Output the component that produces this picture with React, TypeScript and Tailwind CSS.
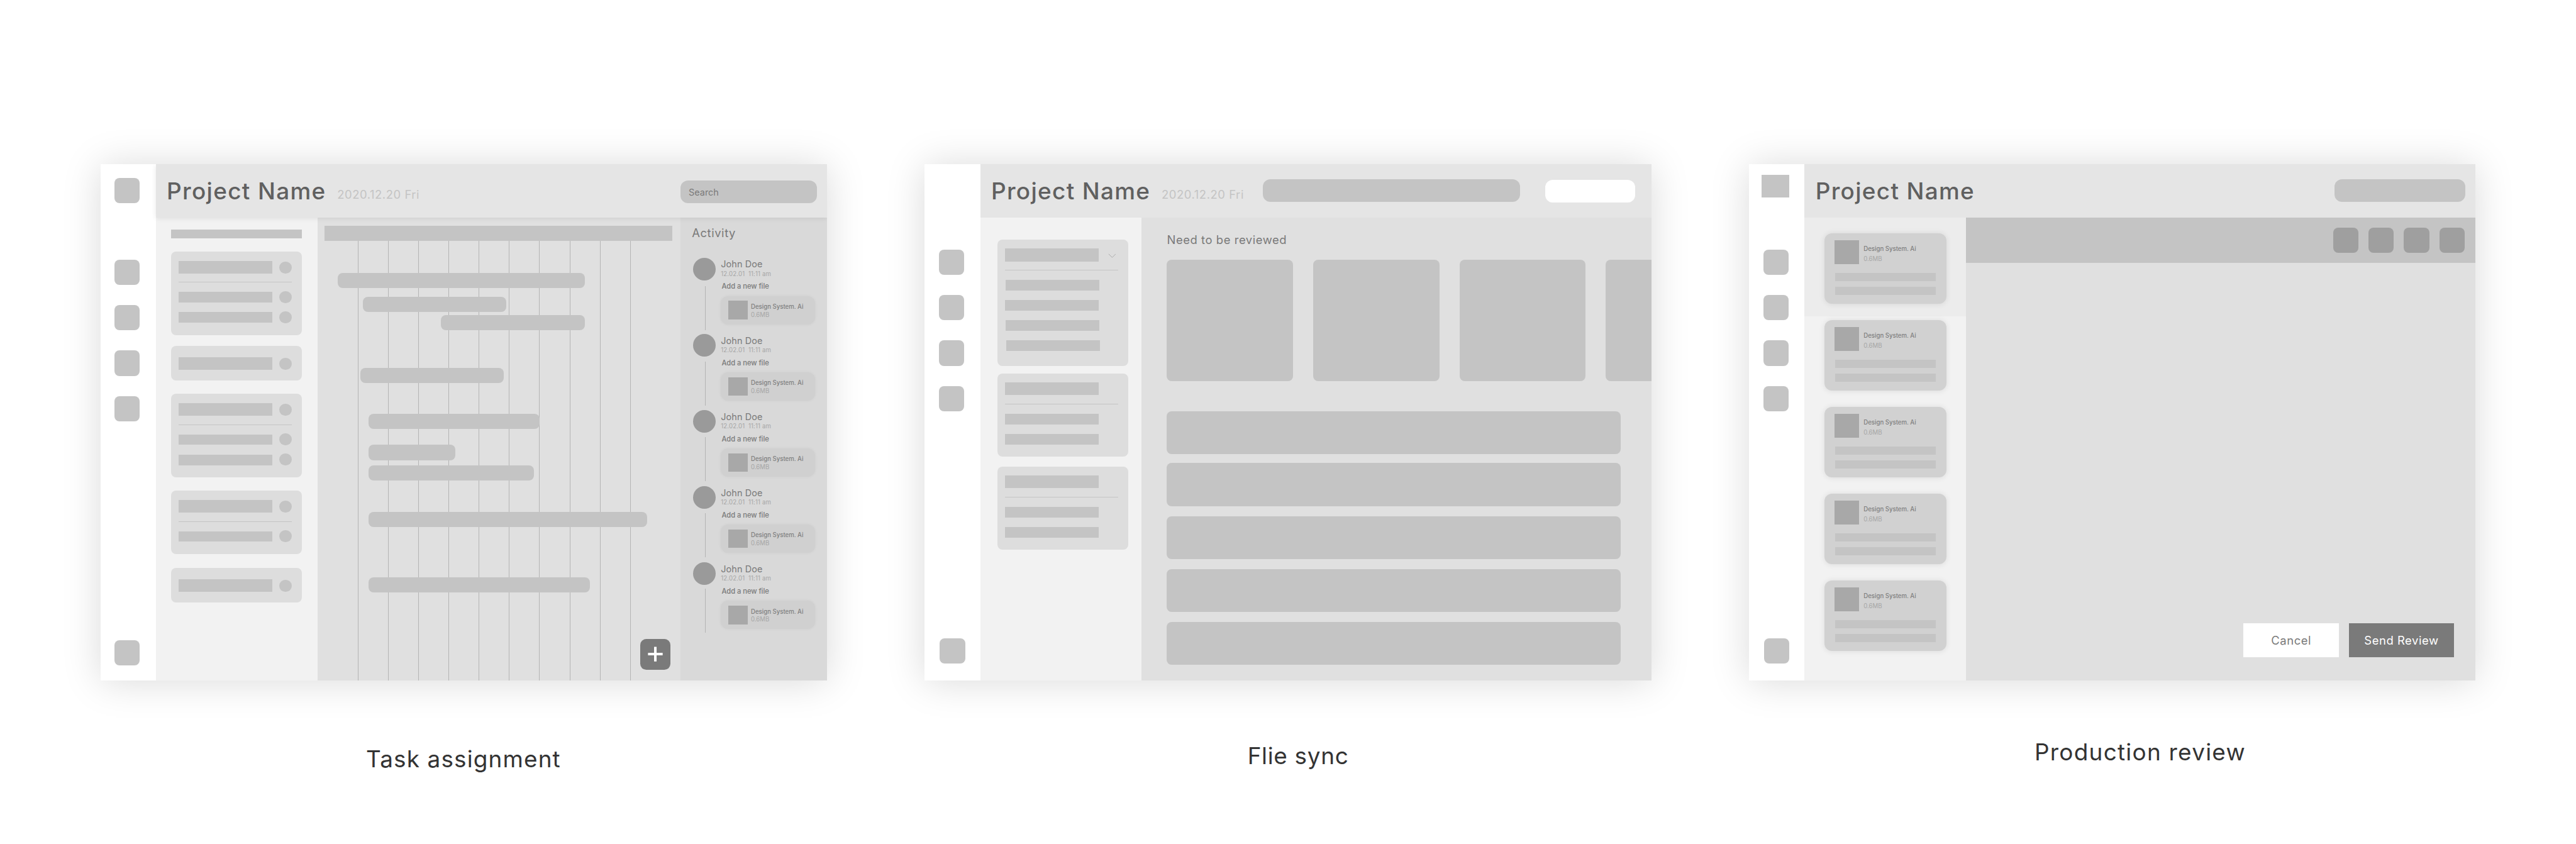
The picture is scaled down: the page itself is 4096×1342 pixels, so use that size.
import type { ReactNode } from "react";

/* ---------- shared pieces ---------- */

function Frame({
  caption,
  captionClass,
  children,
}: {
  caption: string;
  captionClass: string;
  children: ReactNode;
}) {
  return (
    <section className="w-[1440px] shrink-0">
      <div className="flex h-[1024px] overflow-hidden bg-[#e0e0e0] shadow-[0_2px_72px_rgba(0,0,0,0.15)]">
        {children}
      </div>
      <h2
        className={`text-[46px] leading-[58px] font-normal whitespace-nowrap text-[#333333] ${captionClass}`}
      >
        {caption}
      </h2>
    </section>
  );
}

function Rail({ logo, navClass, footClass }: { logo?: string; navClass: string; footClass: string }) {
  return (
    <nav className="flex w-[110px] shrink-0 flex-col bg-white">
      <div className="h-[106px] shrink-0">{logo && <div className={`bg-[#c4c4c4] ${logo}`} />}</div>
      <div className={`flex flex-col gap-[40px] pl-[28px] ${navClass}`}>
        {[0, 1, 2, 3].map((i) => (
          <div key={i} className="size-[50px] rounded-[10px] bg-[#c4c4c4]" />
        ))}
      </div>
      <div className={`mt-auto size-[50px] rounded-[10px] bg-[#c4c4c4] ${footClass}`} />
    </nav>
  );
}

function Header({ date, className = "", children }: { date?: boolean; className?: string; children: ReactNode }) {
  return (
    <header className={`flex h-[106px] shrink-0 items-start bg-[#e5e5e5] pl-[21.5px] ${className}`}>
      <h1 className="mt-[25.3px] w-[338px] text-[46px] leading-[58px] font-medium tracking-[1.66px] whitespace-nowrap text-[#606060]">
        Project Name
      </h1>
      {date && (
        <span className="mt-[46.7px] text-[23px] leading-[29px] tracking-[0.69px] whitespace-nowrap text-[#c4c4c4]">
          2020.12.20 Fri
        </span>
      )}
      {children}
    </header>
  );
}

/* ---------- task assignment ---------- */

function TaskCard({ rows, className }: { rows: number; className: string }) {
  const single = rows === 0;
  return (
    <div
      className={`w-[260px] rounded-[10px] bg-[#dddddd] px-[15px] ${single ? "py-[22px]" : "pt-[18px] pb-[23px]"} ${className}`}
    >
      <div className="flex h-[25px]">
        <div className="h-[25px] w-[186px] bg-[#c4c4c4]" />
        <div className="mt-px ml-[14px] size-[24px] rounded-full bg-[#c4c4c4]" />
      </div>
      {!single && (
        <>
          <div className="mt-[17px] h-px w-[224px] bg-[#c4c4c4]" />
          <div className="mt-[17px] flex flex-col gap-[16px]">
            {Array.from({ length: rows }, (_, i) => (
              <div key={i} className="flex h-[24px]">
                <div className="mt-[2px] h-[21px] w-[186px] bg-[#c4c4c4]" />
                <div className="ml-[14px] size-[24px] rounded-full bg-[#c4c4c4]" />
              </div>
            ))}
          </div>
        </>
      )}
    </div>
  );
}

const ganttBars = [
  "mt-[64px] ml-[26px] w-[490px]",
  "mt-[17px] ml-[76px] w-[285px]",
  "mt-[7px] ml-[231px] w-[285px]",
  "mt-[74px] ml-[71px] w-[285px]",
  "mt-[61px] ml-[88px] w-[339px]",
  "mt-[32px] ml-[88px] w-[172px]",
  "mt-[10px] ml-[88px] w-[328px]",
  "mt-[63px] ml-[88px] w-[552px]",
  "mt-[99px] ml-[88px] w-[438px]",
];

function Timeline() {
  return (
    <div className="relative w-[720px] shrink-0 pt-[16px] pl-[14px]">
      <div className="h-[30px] w-[690px] bg-[#c4c4c4]" />
      <div className="absolute top-[46px] bottom-0 left-[80px] flex">
        {Array.from({ length: 10 }, (_, i) => (
          <div key={i} className="w-[60px]">
            <div className="h-full w-px bg-[#b4b4b4]" />
          </div>
        ))}
      </div>
      <div className="relative">
        {ganttBars.map((bar) => (
          <div key={bar} className={`h-[30px] rounded-[10px] bg-[#c4c4c4] ${bar}`} />
        ))}
      </div>
      <button
        aria-label="Add task"
        className="absolute right-[20px] bottom-[22px] flex size-[60px] items-center justify-center rounded-[12px] bg-[#7a7a7a]"
      >
        <svg viewBox="0 0 30 30" className="size-[30px]" fill="none" stroke="#fff" strokeWidth="5">
          <path d="M15 0.5v29M0.5 15h29" />
        </svg>
      </button>
    </div>
  );
}

const threads = ["mt-[11px]", "mt-[10px]", "mt-[9px]", "mt-[8px]", "mt-[7px]"];

function Activity() {
  return (
    <aside className="w-[290px] shrink-0 bg-[#d9d9d9]">
      <h3 className="mt-[16px] ml-[22.5px] text-[23px] leading-[29px] tracking-[0.7px] text-[#7a7a7a]">Activity</h3>
      <ul className="mt-[35px] ml-[25px]">
        {threads.map((thread) => (
          <li key={thread} className="flex h-[151px] items-start">
            <div className="w-[55px] shrink-0">
              <div className="size-[45px] rounded-full bg-[#9a9a9a]" />
              <div className={`ml-[23px] h-[87px] w-px bg-[#b4b4b4] ${thread}`} />
            </div>
            <div className="whitespace-nowrap">
              <p className="mt-[1.9px] text-[18px] leading-[22px] tracking-[0.1px] text-[#7a7a7a]">John Doe</p>
              <p className="mt-[0.7px] text-[12px] leading-[14px] tracking-[0.19px] whitespace-pre text-[#a6a6a6]">
                {"12.02.01  11:11 am"}
              </p>
              <p className="mt-[10.8px] ml-[1.5px] text-[14px] leading-[17px] font-medium tracking-[-0.08px] text-[#7a7a7a]">
                Add a new file
              </p>
              <div className="mt-[9.6px] flex h-[56px] w-[186px] items-center rounded-[15px] bg-[#d0d0d0] pl-[15px] shadow-[0_0_6px_rgba(0,0,0,0.05)]">
                <div className="h-[37px] w-[38px] bg-[#a8a8a8]" />
                <div className="ml-[6.5px] flex flex-col gap-[2px] pt-[2px] text-[12px] leading-[14px]">
                  <span className="font-medium text-[#7f7f7f]">Design System. Ai</span>
                  <span className="text-[#a6a6a6]">0.6MB</span>
                </div>
              </div>
            </div>
          </li>
        ))}
      </ul>
    </aside>
  );
}

function TaskAssignment() {
  return (
    <Frame caption="Task assignment" captionClass="mt-[127px] ml-[526.5px] tracking-[1.43px]">
      <Rail logo="mt-[28px] ml-[28px] size-[50px] rounded-[10px]" navClass="mt-[84px]" footClass="mb-[30px] ml-[28px]" />
      <div className="flex w-[1330px] flex-col">
        <Header date className="relative z-10 shadow-[0_2px_10px_rgba(0,0,0,0.09)]">
          <div className="mt-[33px] mr-[20px] ml-auto flex h-[45px] w-[270px] items-center rounded-[15px] bg-[#c4c4c4] pt-[2px] pl-[16px] text-[18px] leading-[22px] text-[#7a7a7a]">
            Search
          </div>
        </Header>
        <div className="flex flex-1">
          <div className="w-[320px] shrink-0 bg-[#f2f2f2] pl-[30px]">
            <div className="mt-[24px] h-[18px] w-[260px] bg-[#c4c4c4]" />
            <TaskCard rows={2} className="mt-[26px] h-[165px]" />
            <TaskCard rows={0} className="mt-[22px] h-[68px]" />
            <TaskCard rows={2} className="mt-[27px] h-[165px]" />
            <TaskCard rows={1} className="mt-[27px] h-[125px]" />
            <TaskCard rows={0} className="mt-[28px] h-[68px]" />
          </div>
          <Timeline />
          <Activity />
        </div>
      </div>
    </Frame>
  );
}

/* ---------- file sync ---------- */

function FileGroup({ rows, chevron, className }: { rows: string[]; chevron?: boolean; className: string }) {
  return (
    <div className={`w-[260px] rounded-[10px] bg-[#dddddd] px-[15px] pt-[18px] ${className}`}>
      <div className="flex h-[25px]">
        <div className="w-[186px] bg-[#c4c4c4]" />
        {chevron && (
          <svg viewBox="0 0 16 9" className="mt-[9px] ml-[18px] h-[9px] w-[16px]" fill="none" stroke="#a0a0a0">
            <path d="M1 1l7 7 7-7" />
          </svg>
        )}
      </div>
      <div className="mt-[17px] h-px w-[224px] bg-[#c4c4c4]" />
      <div className="mt-[19px] flex flex-col gap-[19px]">
        {rows.map((indent, i) => (
          <div key={i} className={`h-[21px] w-[186px] bg-[#c4c4c4] ${indent}`} />
        ))}
      </div>
    </div>
  );
}

function FileSync() {
  return (
    <Frame caption="Flie sync" captionClass="mt-[120.8px] ml-[639.8px] tracking-[0.85px]">
      <Rail navClass="mt-[64px]" footClass="mb-[34px] ml-[30px]" />
      <div className="flex w-[1330px] flex-col">
        <Header date>
          <div className="mt-[30px] ml-auto h-[45px] w-[510px] rounded-[15px] bg-[#c4c4c4]" />
          <div className="mt-[31px] mr-[32px] ml-[50px] h-[45px] w-[178px] rounded-[15px] bg-white" />
        </Header>
        <div className="flex flex-1">
          <div className="w-[320px] shrink-0 bg-[#f2f2f2] pl-[34px]">
            <FileGroup chevron rows={["ml-px", "", "ml-px", "ml-[2px]"]} className="mt-[44px] h-[250px]" />
            <FileGroup rows={["", ""]} className="mt-[15px] h-[165px]" />
            <FileGroup rows={["", ""]} className="mt-[20px] h-[165px]" />
          </div>
          <div className="w-[1010px] overflow-hidden pl-[50px]">
            <h3 className="mt-[30.7px] text-[23px] leading-[29px] tracking-[0.69px] whitespace-nowrap text-[#7a7a7a]">
              Need to be reviewed
            </h3>
            <div className="mt-[24.3px] flex gap-[40px]">
              {[0, 1, 2, 3].map((i) => (
                <div key={i} className="h-[240px] w-[250px] shrink-0 rounded-[10px] bg-[#c4c4c4]" />
              ))}
            </div>
            <div className="mt-[60px] h-[85px] w-[900px] rounded-[10px] bg-[#c4c4c4]" />
            <div className="mt-[18px] flex flex-col gap-[20px]">
              {[0, 1, 2, 3].map((i) => (
                <div key={i} className="h-[85px] w-[900px] rounded-[10px] bg-[#c4c4c4]" />
              ))}
            </div>
          </div>
        </div>
      </div>
    </Frame>
  );
}

/* ---------- production review ---------- */

function ReviewCard() {
  return (
    <div className="h-[139px] w-[242px] rounded-[15px] bg-[#d1d1d1] pt-[13px] pl-[20px] shadow-[0_1px_12px_rgba(0,0,0,0.09)]">
      <div className="flex">
        <div className="h-[48px] w-[49px] bg-[#a8a8a8]" />
        <div className="mt-[10.5px] ml-[9px] flex flex-col gap-[6px] text-[12px] leading-[14px] whitespace-nowrap">
          <span className="font-medium text-[#7f7f7f]">Design System. Ai</span>
          <span className="text-[#a6a6a6]">0.6MB</span>
        </div>
      </div>
      <div className="mt-[17px] ml-px h-[16px] w-[200px] bg-[#c4c4c4]" />
      <div className="mt-[12px] ml-px h-[16px] w-[200px] bg-[#c4c4c4]" />
    </div>
  );
}

function ProductionReview() {
  return (
    <Frame caption="Production review" captionClass="mt-[113.6px] ml-[565.7px] tracking-[1.57px]">
      <Rail logo="mt-[21px] ml-[25px] h-[45px] w-[55px]" navClass="mt-[64px]" footClass="mb-[34px] ml-[30px]" />
      <div className="flex w-[1330px] flex-col">
        <Header>
          <div className="mt-[30px] mr-[20px] ml-auto h-[45px] w-[260px] rounded-[15px] bg-[#c4c4c4]" />
        </Header>
        <div className="flex flex-1">
          <div className="flex w-[320px] shrink-0 flex-col bg-[#f2f2f2]">
            <div className="h-[196px] bg-[#ececec] pt-[32px] pl-[39px]">
              <ReviewCard />
            </div>
            <div className="flex flex-col gap-[33px] pt-[8px] pl-[39px]">
              {[0, 1, 2, 3].map((i) => (
                <ReviewCard key={i} />
              ))}
            </div>
          </div>
          <div className="flex w-[1010px] flex-col">
            <div className="flex h-[90px] items-center justify-end gap-[20px] bg-[#c4c4c4] pr-[22px]">
              {[0, 1, 2, 3].map((i) => (
                <div key={i} className="size-[50px] rounded-[10px] bg-[#9f9f9f]" />
              ))}
            </div>
            <div className="mt-auto mr-[43px] mb-[46px] flex justify-end gap-[20px] text-[23px] leading-[29px] whitespace-nowrap">
              <button className="h-[68px] w-[189px] bg-white pt-px tracking-[0.67px] text-[#7a7a7a]">Cancel</button>
              <button className="h-[68px] w-[208px] bg-[#7a7a7a] pt-px tracking-[0.68px] text-white">Send Review</button>
            </div>
          </div>
        </div>
      </div>
    </Frame>
  );
}

export default function App() {
  return (
    <div className="flex h-[1672px] w-[5105px] gap-[194px] overflow-hidden bg-white pt-[325px] pl-[199px] font-['Inter',sans-serif] [zoom:0.8022]">
      <TaskAssignment />
      <FileSync />
      <ProductionReview />
    </div>
  );
}
